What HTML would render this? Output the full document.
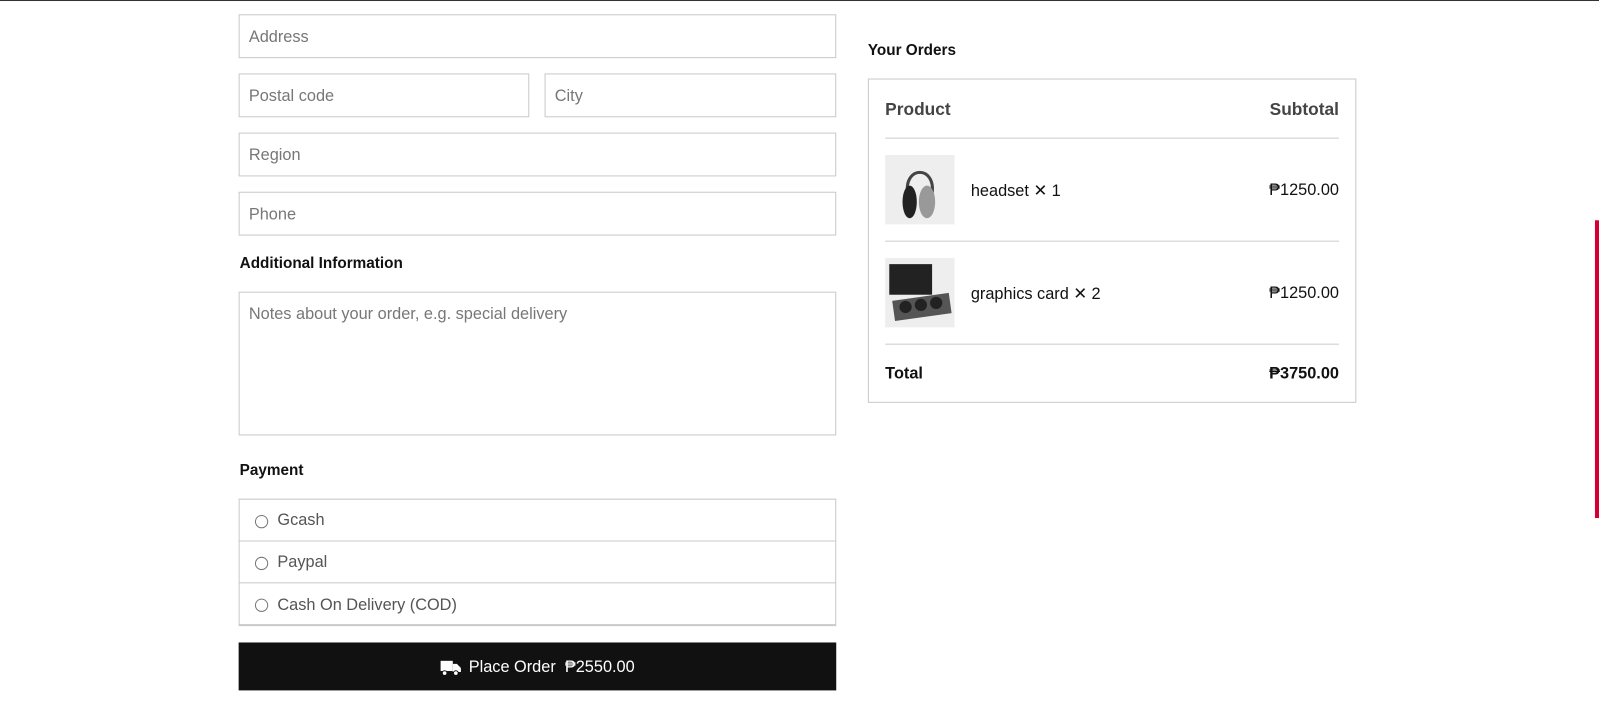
<!DOCTYPE html>
<html><head><meta charset="utf-8"><style>
*{box-sizing:border-box;margin:0;padding:0}
html,body{width:1599px;height:722px;overflow:hidden;background:#fff}
#w{position:absolute;left:0;top:0;width:1568px;height:708px;transform:scale(1.0198);transform-origin:0 0;font-family:"Liberation Sans",sans-serif;color:#111}
.a{position:absolute}
.in{position:absolute;border:1px solid #c9c9c9;font-size:16px;color:#777;padding-left:9px;padding-top:2px;display:flex;align-items:center;background:#fff}
.h{position:absolute;font-weight:bold;font-size:15px;color:#111}
.rad{display:inline-block;width:13px;height:13px;border:1px solid #777;border-radius:50%;margin:0 9px 0 16px}
.pay{position:absolute;left:234px;width:586px;height:41px;border-bottom:1px solid #c9c9c9;display:flex;align-items:center;font-size:16px;color:#555;padding-top:2px}
.row{position:absolute;left:868px;width:445px;font-size:16px}
.p{position:absolute;right:0;top:1px}
</style></head><body><div id="w">
<div class="a" style="left:0;top:0;width:1568px;height:1px;background:#333"></div>
<div class="in" style="left:234px;top:14px;width:586px;height:43px">Address</div>
<div class="in" style="left:234px;top:72px;width:285px;height:43px">Postal code</div>
<div class="in" style="left:534px;top:72px;width:286px;height:43px">City</div>
<div class="in" style="left:234px;top:130px;width:586px;height:43px">Region</div>
<div class="in" style="left:234px;top:188px;width:586px;height:43px">Phone</div>
<div class="h" style="left:235px;top:250px">Additional Information</div>
<div class="in" style="left:234px;top:286px;width:586px;height:141px;align-items:flex-start;padding-top:13px">Notes about your order, e.g. special delivery</div>
<div class="h" style="left:235px;top:453px">Payment</div>
<div class="a" style="left:234px;top:489px;width:586px;height:125px;border:1px solid #c9c9c9;border-bottom:2px solid #c9c9c9"></div>
<div class="pay" style="top:490px"><span class="rad"></span>Gcash</div>
<div class="pay" style="top:531px"><span class="rad"></span>Paypal</div>
<div class="pay" style="top:572px;border:none"><span class="rad"></span>Cash On Delivery (COD)</div>
<div class="a" style="left:234px;top:630px;width:586px;height:47px;background:#111;color:#fff;font-size:16px;display:flex;align-items:center;justify-content:center;padding-top:2px">
<svg width="20" height="16" viewBox="0 0 20 16" style="margin-right:8px"><rect x="0" y="1" width="12" height="10" fill="#fff"/><path d="M12 4h4l4 4v4h-8z" fill="#fff"/><circle cx="4" cy="13" r="2.3" fill="#fff" stroke="#111"/><circle cx="15" cy="13" r="2.3" fill="#fff" stroke="#111"/></svg>Place Order&nbsp; ₱2550.00</div>

<div class="h" style="left:851px;top:41px">Your Orders</div>
<div class="a" style="left:851px;top:77px;width:479px;height:318px;border:1px solid #c9c9c9"></div>
<div class="row" style="top:98px;font-weight:bold;font-size:17px;color:#444"><span>Product</span><span style="position:absolute;right:0">Subtotal</span></div>
<div class="a" style="left:868px;top:135px;width:445px;height:1px;background:#ccc"></div>
<div class="a" style="left:868px;top:152px;width:68px;height:68px;background:#eee"><svg width="68" height="68"><path d="M22 38 C18 10 50 10 46 38" stroke="#444" stroke-width="3" fill="none"/><ellipse cx="24" cy="46" rx="7" ry="16" fill="#222"/><ellipse cx="41" cy="46" rx="8" ry="16" fill="#999"/></svg></div>
<div class="row" style="top:177px"><span style="margin-left:84px">headset ✕ 1</span><span class="p">₱1250.00</span></div>
<div class="a" style="left:868px;top:236px;width:445px;height:1px;background:#ccc"></div>
<div class="a" style="left:868px;top:253px;width:68px;height:68px;background:#eee"><svg width="68" height="68"><rect x="4" y="6" width="42" height="30" fill="#222"/><rect x="8" y="38" width="56" height="20" fill="#555" transform="rotate(-8 36 48)"/><circle cx="20" cy="48" r="6" fill="#222"/><circle cx="35" cy="46" r="6" fill="#222"/><circle cx="50" cy="44" r="6" fill="#222"/></svg></div>
<div class="row" style="top:278px"><span style="margin-left:84px">graphics card ✕ 2</span><span class="p">₱1250.00</span></div>
<div class="a" style="left:868px;top:337px;width:445px;height:1px;background:#ccc"></div>
<div class="row" style="top:358px;font-weight:bold"><span>Total</span><span style="position:absolute;right:0">₱3750.00</span></div>
<div class="a" style="left:1564px;top:216px;width:4px;height:292px;background:#d50032"></div>
</div></body></html>
